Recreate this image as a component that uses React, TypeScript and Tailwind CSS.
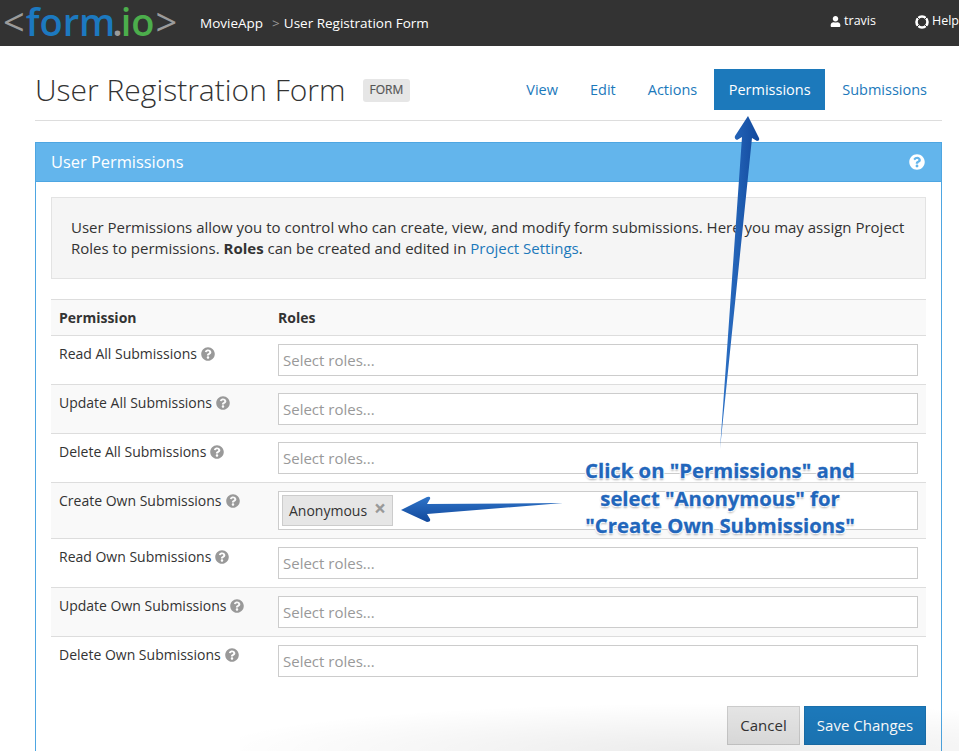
import { FaQuestionCircle, FaUser } from "react-icons/fa"

const rows = [
  { name: "Read All Submissions" },
  { name: "Update All Submissions" },
  { name: "Delete All Submissions" },
  { name: "Create Own Submissions", selected: "Anonymous" },
  { name: "Read Own Submissions" },
  { name: "Update Own Submissions" },
  { name: "Delete Own Submissions" },
]

function LifeRing() {
  return (
    <svg viewBox="0 0 14 14" className="h-[14px] w-[14px]" fill="none">
      <circle cx="7" cy="7" r="5.500" stroke="#fff" strokeWidth="2.600" />
      <path d="M2 2l2.800 2.800M12 2L9.200 4.800M2 12l2.800-2.800M12 12L9.200 9.200" stroke="#333" strokeWidth="1" />
    </svg>
  )
}

function Arrows() {
  return (
    <svg className="absolute left-0 top-0 pointer-events-none" width="959" height="751">
      <defs>
        <linearGradient id="up" x1="0" x2="1" y1="0" y2="0">
          <stop offset="0" stopColor="#2f74c8" />
          <stop offset="1" stopColor="#11489c" />
        </linearGradient>
        <linearGradient id="left" x1="0" x2="0" y1="0" y2="1">
          <stop offset="0" stopColor="#2f74c8" />
          <stop offset="1" stopColor="#11489c" />
        </linearGradient>
      </defs>
      <path
        d="M748 116 L759 138 Q760 141 757 141 L752 138 L720 449 L742 137 L737 140 Q734 139 735 136 Z"
        fill="url(#up)"
      />
      <path
        d="M401 510 L427 497 Q431 496 430 499 L427 504 L563 503 L427 514 L430 519 Q431 522 427 522 Z"
        fill="url(#left)"
      />
    </svg>
  )
}

export default function App() {
  return (
    <div className="relative h-[751px] w-[959px] overflow-hidden bg-white font-['Open_Sans',sans-serif] text-[#333]">
      <nav className="flex h-[46px] items-center whitespace-nowrap bg-[#333] text-[13.500px] text-white">
        <div className="ml-[3px] flex h-[46px] w-[179px] items-center pb-[4px] text-[38px] font-semibold leading-[40px]">
          <span className="font-normal text-[#9b9b9b]">&lt;</span>
          <span className="ml-[1px] text-[#1c79c0]">form</span>
          <span className="ml-[-3px] text-[#9b9b9b]">.</span>
          <span className="ml-[-2px] text-[#4cae4c]">io</span>
          <span className="ml-[1px] font-normal text-[#9b9b9b]">&gt;</span>
        </div>
        <span className="ml-[18px]">MovieApp</span>
        <span className="ml-[9px] text-[#999]">&gt;</span>
        <span className="ml-[4px]">User Registration Form</span>
        <span className="ml-auto mb-[3px] flex items-center gap-[3px] text-[12.500px]">
          <FaUser className="h-[11px] w-[11px] text-white" />
          travis
        </span>
        <span className="ml-[39px] mb-[3px] flex items-center gap-[3px] text-[12.500px]">
          <LifeRing />
          Help
        </span>
      </nav>

      <main className="pl-[35px] pr-[17px]">
        <header className="flex h-[75px] items-start border-b border-[#ddd]">
          <h1 className="mt-[24px] text-[30px] font-light leading-[40px] text-[#333]">User Registration Form</h1>
          <span className="ml-[17px] mt-[33px] rounded-[3px] bg-[#e6e6e6] px-[7px] pb-[3px] pt-[1px] text-[12px] leading-[19px] text-[#555] [-webkit-text-stroke:0.2px_#555]">
            FORM
          </span>
          <div className="ml-auto mr-[15px] mt-[23px] flex h-[41px] items-center gap-[2px] text-[14.500px] text-[#1c79bb]">
            <a className="px-[15px]">View</a>
            <a className="px-[15px]">Edit</a>
            <a className="px-[15px]">Actions</a>
            <a className="flex h-[41px] w-[111px] items-center justify-center bg-[#1c79bb] text-white">Permissions</a>
            <a className="pl-[15px]">Submissions</a>
          </div>
        </header>

        <section className="mt-[21px] border-x border-t border-[#4ea6e2]">
          <div className="flex h-[38px] items-center justify-between bg-[#63b5ec] pl-[15px] pr-[16px] text-[16.400px] text-white">
            User Permissions
            <FaQuestionCircle className="h-[16px] w-[16px] text-white" />
          </div>
          <div className="border-t border-[#4ea6e2] px-[15px] pb-[20px] pt-[15px]">
            <div className="h-[82px] border border-[#e3e3e3] bg-[#f5f5f5] px-[19px] pt-[19px] text-[15px] leading-[21px]">
              User Permissions allow you to control who can create, view, and modify form submissions. Here you may assign Project Roles to permissions. <b>Roles</b> can be created and edited in{" "}
              <a className="text-[#1c79bb]">Project Settings</a>.
            </div>

            <div className="mt-[20px] border-t border-[#ddd] text-[14px]">
              <div className="flex h-[35px] items-center bg-[#f9f9f9] pl-[8px] font-bold">
                <span className="w-[219px]">Permission</span>
                <span>Roles</span>
              </div>
              {rows.map((row, i) => (
                <div
                  key={row.name}
                  className={`flex items-start border-t border-[#ddd] pl-[8px] pr-[8px] ${row.selected ? "h-[56px]" : "h-[49px]"} ${i % 2 === 1 || row.selected ? "bg-[#f9f9f9]" : "bg-white"}`}
                >
                  <span className="mt-[8px] flex w-[219px] items-center gap-[4px] leading-[20px]">
                    {row.name}
                    <FaQuestionCircle className="h-[14px] w-[14px] text-[#999]" />
                  </span>
                  <div className={`mt-[8px] flex flex-1 items-center border border-[#ccc] bg-white ${row.selected ? "h-[39px] pl-[3px]" : "h-[32px] pl-[4px]"}`}>
                    {row.selected ? (
                      <span className="flex h-[31px] items-center gap-[7px] border border-[#ccc] bg-[#e6e6e6] px-[6px] leading-[20px] text-[#333]">
                        {row.selected}
                        <span className="mb-[4px] text-[21px] font-bold leading-none text-[#999]">×</span>
                      </span>
                    ) : (
                      <span className="text-[15px] text-[#999]">Select roles...</span>
                    )}
                  </div>
                </div>
              ))}
            </div>

            <div className="mt-[21px] flex justify-end gap-[4px] text-[15px]">
              <button className="h-[39px] w-[73px] border border-[#ccc] bg-[#e6e6e6] text-[#333]">Cancel</button>
              <button className="h-[39px] w-[122px] border border-[#1a6fab] bg-[#1c79bb] text-white">Save Changes</button>
            </div>
          </div>
        </section>
      </main>

      <div className="absolute bottom-0 left-[240px] right-0 h-[48px] bg-[radial-gradient(ellipse_70%_100%_at_65%_100%,#00000014,transparent)] pointer-events-none" />

      <Arrows />

      <div className="absolute left-[520px] top-[457px] w-[400px] text-center text-[20.300px] font-bold leading-[27.500px] text-[#2266bb] [-webkit-text-stroke:0.3px_#2266bb] [text-shadow:1px_1px_1px_#fff,-1px_-1px_1px_#fff,1px_-1px_1px_#fff,-1px_1px_1px_#fff,0_2px_2px_#aaa]">
        Click on "Permissions" and
        <br />
        select "Anonymous" for
        <br />
        "Create Own Submissions"
      </div>
    </div>
  )
}
